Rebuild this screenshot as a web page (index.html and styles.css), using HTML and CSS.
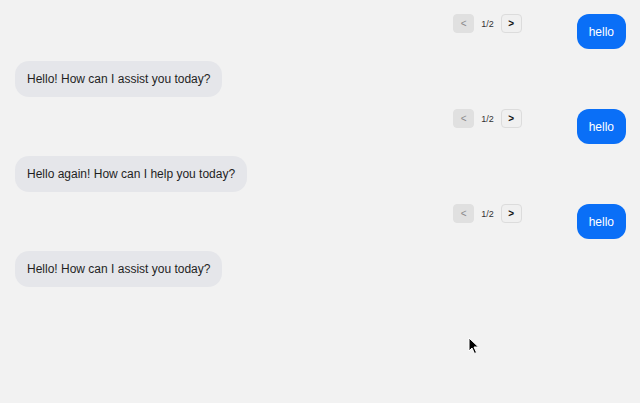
FILE: index.html
```html
<!DOCTYPE html>
<html>
<head>
<meta charset="utf-8">
<link rel="stylesheet" href="styles.css">
</head>
<body>
<div class="chat">
  <div class="row user">
    <div class="pager">
      <button class="pbtn disabled">&lt;</button>
      <span class="count">1/2</span>
      <button class="pbtn">&gt;</button>
    </div>
    <div class="bubble user-bubble">hello</div>
  </div>
  <div class="row bot">
    <div class="bubble bot-bubble">Hello! How can I assist you today?</div>
  </div>
  <div class="row user">
    <div class="pager">
      <button class="pbtn disabled">&lt;</button>
      <span class="count">1/2</span>
      <button class="pbtn">&gt;</button>
    </div>
    <div class="bubble user-bubble">hello</div>
  </div>
  <div class="row bot">
    <div class="bubble bot-bubble">Hello again! How can I help you today?</div>
  </div>
  <div class="row user">
    <div class="pager">
      <button class="pbtn disabled">&lt;</button>
      <span class="count">1/2</span>
      <button class="pbtn">&gt;</button>
    </div>
    <div class="bubble user-bubble">hello</div>
  </div>
  <div class="row bot">
    <div class="bubble bot-bubble">Hello! How can I assist you today?</div>
  </div>
</div>
<svg class="cursor" width="12" height="18" viewBox="0 0 12 18"><path d="M1 1 L1 14 L4 11 L6.5 16.5 L8.5 15.5 L6 10 L10.5 10 Z" fill="#000" stroke="#fff" stroke-width="1"/></svg>
</body>
</html>
```
FILE: styles.css
```css
html, body {
  margin: 0;
  padding: 0;
  background: #f2f2f2;
  font-family: "Liberation Sans", Arial, sans-serif;
}
.chat {
  display: flex;
  flex-direction: column;
  gap: 12px;
  padding: 14px 14px 14px 15px;
}
.row {
  display: flex;
  align-items: flex-start;
}
.row.user {
  justify-content: flex-end;
}
.row.bot {
  justify-content: flex-start;
}
.bubble {
  font-size: 12px;
  line-height: 20px;
}
.user-bubble {
  background: #0a6ff7;
  color: #fff;
  padding: 8px 12px 7px;
  border-radius: 12px;
}
.bot-bubble {
  background: #e5e6ea;
  color: #1f1f1f;
  padding: 8px 12px;
  border-radius: 14px;
}
.pager {
  display: flex;
  align-items: center;
  gap: 7px;
  margin-right: 55px;
}
.pbtn {
  width: 21px;
  height: 19px;
  padding: 0;
  border: 1px solid #dcdcdc;
  border-radius: 4px;
  background: #f0f0f0;
  color: #111;
  font-family: "Liberation Sans", Arial, sans-serif;
  font-size: 10px;
  font-weight: 700;
  line-height: 17px;
}
.pbtn.disabled {
  background: #e0e0e0;
  color: #8a8a8a;
  border-color: #e0e0e0;
  font-weight: 400;
}
.count {
  font-size: 9px;
  color: #333;
}
.cursor {
  position: absolute;
  left: 468px;
  top: 337px;
}
```
